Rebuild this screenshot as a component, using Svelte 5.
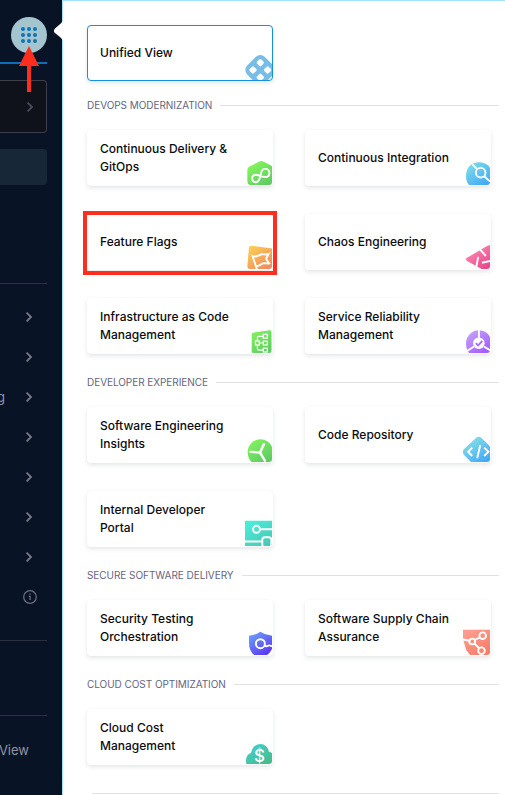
<script>
  const sections = [
    {
      title: 'DEVOPS MODERNIZATION',
      items: [
        ['Continuous Delivery & GitOps', 'cd'],
        ['Continuous Integration', 'ci'],
        ['Feature Flags', 'ff', true],
        ['Chaos Engineering', 'chaos'],
        ['Infrastructure as Code Management', 'iac'],
        ['Service Reliability Management', 'srm'],
      ],
    },
    {
      title: 'DEVELOPER EXPERIENCE',
      items: [
        ['Software Engineering Insights', 'sei'],
        ['Code Repository', 'code'],
        ['Internal Developer Portal', 'idp'],
      ],
    },
    {
      title: 'SECURE SOFTWARE DELIVERY',
      items: [
        ['Security Testing Orchestration', 'sto'],
        ['Software Supply Chain Assurance', 'ssca'],
      ],
    },
    { title: 'CLOUD COST OPTIMIZATION', items: [['Cloud Cost Management', 'ccm']] },
  ];
  const gradients = {
    cd: ['#86f85c', '#5fca63'],
    ci: ['#84dfe8', '#41aaf5'],
    ff: ['#fdcf50', '#ee8b62'],
    chaos: ['#ff8fb8', '#e8488a'],
    iac: ['#84f55d', '#5fcb62'],
    srm: ['#c6a5fb', '#a45cfb'],
    sei: ['#84f55d', '#5fca63'],
    code: ['#86dfe6', '#41a9f7'],
    idp: ['#48ecd9', '#4cc5b4'],
    sto: ['#6ba5fa', '#5b35f5'],
    ssca: ['#ff9b8e', '#f67c67'],
    ccm: ['#40d2d4', '#47bb8b'],
  };
  const gridDots = [0, 1, 2, 3, 4, 5, 6, 7, 8];
</script>

{#snippet chevron()}
  <svg class="chev" width="8" height="12" viewBox="0 0 8 12"><path d="M1.6 1.6 6 6 1.6 10.4" /></svg>
{/snippet}

{#snippet icon(name)}
  <svg class="icon" width="30" height="30" viewBox="0 0 30 30">
    {#if gradients[name]}
      <defs>
        <linearGradient id={'g-' + name} gradientUnits="userSpaceOnUse" x1="9" y1="7" x2="25" y2="30">
          <stop offset="0" stop-color={gradients[name][0]} />
          <stop offset="1" stop-color={gradients[name][1]} />
        </linearGradient>
      </defs>
    {/if}
    <g fill={`url(#g-${name})`}>
      {#if name === 'unified'}
        <rect x="5.8" y="7.5" width="25" height="25" rx="6.5" transform="rotate(45 18.3 20)" fill="#79bde7" />
        <g fill="#fff">
          {#each [[18.3, 12.7], [11, 20], [25.6, 20], [18.3, 27.3]] as [x, y]}
            <rect x={x - 3} y={y - 3} width="6" height="6" rx="1.6" transform={`rotate(45 ${x} ${y})`} />
          {/each}
        </g>
      {:else if name === 'cd'}
        <path d="M16.8 6.7Q19.3 5.4 21.8 6.7L30 11V30H8Q5.3 29 5.3 26V15Q5.3 12.6 7.5 11.5Z" />
        <path class="w" d="M14 27.2C11.8 27.2 10.2 25.6 10.2 23.5C10.2 21.3 11.8 19.8 14 19.8C17 19.8 18.3 22 23.3 22C25.8 22 27.4 20.2 27.4 17.9C27.4 15.6 25.8 13.9 23.3 13.9C18.5 13.9 19.5 18.8 17.4 24.2C16.8 25.8 15.8 27.2 14 27.2" />
      {:else if name === 'ci'}
        <path d="M18 7.3H20Q26 7.6 30 12.5V30H9Q6 27 6 21Q6.5 8.3 18 7.3Z" />
        <circle class="w" cx="20.7" cy="17.7" r="4.8" />
        <path class="w" d="M12.3 9.3 17 14M24.3 21.3 30 26.5" />
      {:else if name === 'ff'}
        <path d="M7 8.5Q7.3 6.4 9.5 6.7L30 9.5V30H7Q5.2 29 5.4 27Z" />
        <path class="w" d="M15 30.5 10.6 17.2C14.5 18.8 17.5 15.2 20.5 15.2C22.5 15.2 24.3 16 26.6 15L24 20 27.3 24.4C25 25 23.3 23.8 21 24.4C18.5 25 17 27.8 13.9 27.2" />
      {:else if name === 'chaos'}
        <path d="M30 6V30H21.7L7 22Q4.8 20.3 7 18.8L27 7Z" />
        <path class="w" d="M19.5 9.8 25.8 17M18.2 17.8 16.2 28.5M22 23.7 30 22" />
      {:else if name === 'iac'}
        <path d="M9.7 11.2Q9.8 9.9 11 9.7L27.5 7.3Q29.4 7.1 29.5 9V30H11Q9.7 29.7 9.7 28.5Z" />
        <g class="w thin">
          <rect x="13.5" y="18" width="3.8" height="4" />
          <rect x="21.3" y="11.4" width="4" height="3.8" />
          <rect x="21.3" y="18.2" width="4" height="3.8" />
          <rect x="21.3" y="25.2" width="4" height="3.8" />
          <path d="M17.3 20H21.3M15.4 18V14.8Q15.4 13.4 16.8 13.4H21.3M15.4 22V25.8Q15.4 27.2 16.8 27.2H21.3" />
        </g>
      {:else if name === 'srm'}
        <path d="M30 14V30H9Q6 26 6 20.3A12.8 12.8 0 0 1 18.7 7.3Q26.5 7.3 30 14Z" />
        <path class="w" d="M18.9 6V16M14 23.5 7 28M23.8 23.5 30.5 27.5" />
        <circle cx="18.8" cy="20.2" r="5.8" fill="#fff" />
        <path class="w" style:stroke="#ac70fb" d="M15.8 20.2 18.1 22.5 22.3 18" />
      {:else if name === 'sei'}
        <path d="M30 15V30H9.5Q5.7 26 5.7 20.3A12.7 12.7 0 0 1 18.3 7.3Q26.5 7.5 30 15Z" />
        <path d="M17.2 19.2 21 11Q23 10.5 23.2 12.3L19.5 20.5 24.2 28.6Q23.5 30.5 22 29.6L17.2 21.8 7.7 20.8Q6.5 19.5 7.9 18.7Z" fill="#fff" />
      {:else if name === 'code'}
        <path d="M16.4 5.6Q18.7 3.8 21 5.6L30 14.4V30H11L3.6 22.5Q1.9 20 3.6 17.6Z" />
        <path class="w" d="M12.2 15.6 8.2 19.8 12.2 24M20.2 13.3 17.2 26.3M24.2 15.6 28.5 19.8 24.2 24" />
      {:else if name === 'idp'}
        <path d="M3 5.5Q3 4.7 4 4.7H30V30H3Z" />
        <circle class="w" cx="14.5" cy="13.3" r="3.5" />
        <path class="w" d="M18 13.3H30M3 25.5H20" />
        <rect class="w" x="20.3" y="21.3" width="9" height="10" rx="2.5" />
      {:else if name === 'sto'}
        <path d="M18.3 6.7Q23 10 30 10.7V24Q28 28 25 30H12Q7 25.5 7 18V10.7Q14 10 18.3 6.7Z" />
        <circle class="w" cx="18.4" cy="18.7" r="4.5" />
        <path class="w" d="M22.4 20.5Q24.4 22 25.8 20.8T30 21.5" />
      {:else if name === 'ssca'}
        <path d="M3 4.7H30V30H10L6.2 25 3 14Z" />
        <circle class="w" cx="12.3" cy="16.5" r="2.9" />
        <circle class="w" cx="22.7" cy="10.7" r="3.3" />
        <circle class="w" cx="21.5" cy="25.7" r="3.3" />
        <path class="w" d="M3 14.5 9.4 15.8M14.8 15 19.8 12.3M14.3 18.5 19.2 23.3" />
      {:else if name === 'ccm'}
        <path d="M4.3 30Q2.8 21 9 19Q11 10 18.3 10Q25.5 10.3 27 18Q29 18 30 19.3V30Z" />
        <text x="17.4" y="28" text-anchor="middle" fill="#fff">$</text>
      {/if}
    </g>
  </svg>
{/snippet}

{#snippet card(label, name, marked, active)}
  <a class="card" class:marked class:active href="#{name}">
    <span>{label}</span>
    {@render icon(name)}
  </a>
{/snippet}

<div class="page">
  <aside>
    <div class="apps">
      <div class="apps-btn">
        <div class="dots">{#each gridDots as d (d)}<i></i>{/each}</div>
      </div>
      <svg class="arrow" width="20" height="46" viewBox="0 0 20 46"><path d="M10 0 20 20H12V46H8V20H0Z" /></svg>
    </div>
    <div class="scope">{@render chevron()}</div>
    <div class="current"></div>
    <nav>
      {#each ['', '', 'g', '', '', '', ''] as tail}
        <div class="row"><span>{tail}</span>{@render chevron()}</div>
      {/each}
      <div class="row">
        <span></span>
        <svg class="info" width="14" height="14" viewBox="0 0 14 14"><circle cx="7" cy="7" r="6.3" /><path d="M5.8 6.3H7.1V10M7 3.6V4.8" /></svg>
      </div>
    </nav>
    <div class="setup"></div>
    <div class="foot">View</div>
  </aside>

  <main>
    <svg class="notch" width="11" height="24" viewBox="0 0 11 24"><path d="M11 0Q10 2.5 7.5 4.8L2 9.5Q-.3 12 2 14L7.5 18.5Q10 20.8 11 23.5Z" /></svg>
    <div class="single">{@render card('Unified View', 'unified', false, true)}</div>
    {#each sections as s}
      <section>
        <h2>{s.title}</h2>
        <div class="grid">
          {#each s.items as [label, name, marked]}{@render card(label, name, marked, false)}{/each}
        </div>
      </section>
    {/each}
    <hr />
  </main>
</div>

<style>
  :global(body) { margin: 0; background: #fff; }
  .page { display: flex; width: 505px; height: 795px; overflow: hidden; font-family: Inter, sans-serif; }
  aside { box-sizing: border-box; width: 62px; flex: none; padding-right: 15px; background: linear-gradient(90deg, #081426 54px, #071121); }
  .apps { position: relative; box-sizing: border-box; height: 64px; padding: 17px 0 0 11px; border-bottom: 2px solid #0c70b9; }
  .apps-btn { display: flex; align-items: center; justify-content: center; width: 36px; height: 36px; border-radius: 50%; background: #a4c5cd; }
  .dots { display: grid; grid-template-columns: repeat(3, 4px); gap: 2px; }
  .dots i { width: 4px; height: 4px; border-radius: 50%; background: #0f73b8; }
  .arrow { position: absolute; left: 19px; top: 46px; z-index: 1; fill: #fe2e1f; }
  .scope { display: flex; align-items: center; justify-content: flex-end; box-sizing: border-box; height: 53px; margin-top: 16px; padding-right: 12px; border: 1px solid #3d3d4b; border-left: 0; border-radius: 0 4px 4px 0; background: #10121b; }
  .chev { fill: none; stroke: #777989; stroke-width: 1.8; }
  .scope .chev { stroke: #4a4b5d; }
  .current { height: 36px; margin-top: 16px; border-radius: 0 4px 4px 0; background: #172738; }
  nav { box-sizing: border-box; margin-top: 98px; padding-top: 13.4px; height: 358px; border-top: 1px solid #2b303a; border-bottom: 1px solid #2b303a; }
  .row { display: flex; align-items: center; justify-content: space-between; height: 40px; padding-right: 14px; color: #9293a2; font-size: 13px; }
  .row span { margin-left: -3px; }
  .row:last-child { padding-right: 10px; }
  .info { fill: none; stroke: #6d6f80; stroke-width: 1.2; }
  .setup { height: 74px; border-bottom: 1px solid #2b303a; }
  .foot { margin-top: 25px; width: 29px; display: flex; justify-content: flex-end; color: #9293a2; font-size: 13px; line-height: 18px; }
  main { position: relative; box-sizing: border-box; flex: 1; min-width: 0; padding: 24px 6px 0 24px; border-top: 1px solid #a0e2fb; border-left: 1px solid #a0e2fb; background: #fff; }
  .notch { position: absolute; left: -10px; top: 18px; fill: #fff; }
  .single { margin-bottom: -4px; }
  section { padding-top: 20px; }
  h2 { display: flex; align-items: center; gap: 8px; margin: 0 0 16px; color: #64657f; font-size: 10px; font-weight: 400; line-height: 17px; letter-spacing: -.05px; white-space: nowrap; }
  h2::after { content: ''; flex: 1; height: 1px; background: #e1e2e9; }
  .grid { display: grid; grid-template-columns: 186px 186px; gap: 28px 32px; }
  .card { position: relative; display: flex; align-items: center; box-sizing: border-box; width: 186px; height: 56px; padding: 0 34px 0 13px; border-radius: 4px; background: #fff; color: #0b0b0d; box-shadow: 0 0 1px rgba(40, 41, 61, .04), 0 2px 4px rgba(96, 97, 112, .16); font-size: 12px; font-weight: 500; line-height: 18px; letter-spacing: 0; text-decoration: none; }
  .active { border: 1px solid #1490e0; padding-left: 12px; }
  .active .icon { right: 0; bottom: 0; }
  .marked::after { content: ''; position: absolute; inset: -3px -4px -5px; border: 4px solid #fe2e1f; }
  .icon { position: absolute; right: 1px; bottom: 1px; border-bottom-right-radius: 3px; }
  .card span { margin-right: -24px; max-width: 134px; }
  .w { fill: none; stroke: #fff; stroke-width: 1.9; }
  .thin { stroke-width: 1.2; }
  .icon text { font: 500 17px Inter, sans-serif; letter-spacing: 0; }
  hr { height: 1px; margin: 28px 0 0 5px; border: 0; background: #e1e2e9; }
</style>
